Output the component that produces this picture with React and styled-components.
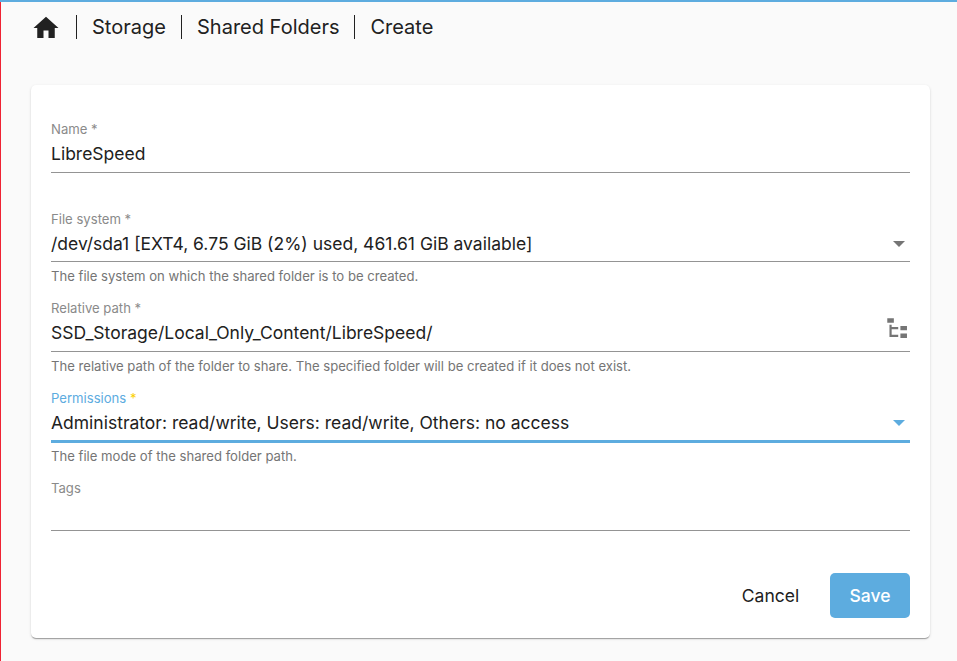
import React from 'react';
import styled, { createGlobalStyle } from 'styled-components';

const GlobalStyle = createGlobalStyle`
  * { box-sizing: border-box; }
  body {
    margin: 0;
    background: #fafafa;
    color: #212121;
    font-family: Inter, "Liberation Sans", sans-serif;
    overflow: hidden;
  }
`;

const Page = styled.div`
  display: flex;
  flex-direction: column;
  height: 661px;
  border-left: 1px solid #ef2334;
`;

const TopBar = styled.div`
  flex: none;
  height: 2px;
  margin-left: -1px;
  background: #5dacdf;
`;

const Breadcrumb = styled.nav`
  display: flex;
  align-items: center;
  flex: none;
  height: 50px;
  padding-left: 30px;
  font-size: 20px;
  line-height: 30px;
  white-space: nowrap;
`;

const HomeIcon = styled.svg`
  width: 30px;
  height: 30px;
  margin-top: 2px;
  fill: #212121;
`;

const Divider = styled.span`
  width: 1px;
  height: 24px;
  margin: 0 15px;
  background: #212121;
`;

const Crumb = styled.span`
  width: ${(p) => p.$width};
`;

const Card = styled.main`
  display: flex;
  flex-direction: column;
  margin: 33px 27px 0 30px;
  height: 553px;
  padding: 34.15px 20px 20px;
  border-radius: 5px;
  background: #fff;
  box-shadow: 0 2px 1px -1px rgba(0, 0, 0, 0.2), 0 1px 1px rgba(0, 0, 0, 0.14),
    0 1px 3px rgba(0, 0, 0, 0.12);
`;

const FieldBox = styled.div`
  display: flex;
  flex-direction: column;
  flex: none;
  height: 89.6px;
`;

const Label = styled.label`
  height: 20px;
  font-size: 13.125px;
  line-height: 20px;
  color: ${(p) => (p.$active ? '#5dacdf' : '#8a8a8a')};
`;

const Required = styled.span`
  color: ${(p) => (p.$active ? '#fbd000' : 'inherit')};
`;

const ValueRow = styled.div`
  display: flex;
  align-items: center;
  justify-content: space-between;
  height: 32.5px;
  padding-bottom: 2.5px;
  font-size: 17.5px;
  line-height: 24px;
  white-space: nowrap;
`;

const Underline = styled.div`
  flex: none;
  height: ${(p) => (p.$active ? '3px' : '1px')};
  margin-bottom: ${(p) => (p.$active ? '-1.5px' : '0')};
  background: ${(p) => (p.$active ? '#5dacdf' : '#949494')};
`;

const Hint = styled.div`
  padding-top: 4.1px;
  font-size: 13.125px;
  line-height: 20px;
  color: #757575;
  white-space: nowrap;
`;

const Arrow = styled.svg`
  width: 12px;
  height: 6px;
  margin-right: 5px;
  fill: ${(p) => (p.$active ? '#5dacdf' : '#757575')};
`;

const TreeIcon = styled.svg`
  width: 26.25px;
  height: 26.25px;
  margin-top: -10px;
  fill: #757575;
`;

const Actions = styled.div`
  display: flex;
  justify-content: flex-end;
  gap: 11px;
  margin-top: auto;
`;

const Button = styled.button`
  width: ${(p) => (p.$primary ? '80px' : '97px')};
  height: 45px;
  padding: 0;
  border: 0;
  border-radius: 5px;
  background: ${(p) => (p.$primary ? '#5dacdf' : 'transparent')};
  color: ${(p) => (p.$primary ? '#fff' : '#212121')};
  font: ${(p) => (p.$primary ? 500 : 400)} 17.5px/45px Inter, "Liberation Sans", sans-serif;
`;

function Field({ label, required, value, hint, active, select, tree }) {
  return (
    <FieldBox>
      <Label $active={active}>
        {label}
        {required && <Required $active={active}> *</Required>}
      </Label>
      <ValueRow>
        <span>{value}</span>
        {select && (
          <Arrow $active={active} viewBox="0 0 12 6">
            <path d="M0 0h12L6 6z" />
          </Arrow>
        )}
        {tree && (
          <TreeIcon viewBox="0 0 24 24">
            <path d="M3,3H9V7H3V3M15,10H21V14H15V10M15,17H21V21H15V17M13,13H7V18H13V20H5V9H7V11H13V13Z" />
          </TreeIcon>
        )}
      </ValueRow>
      <Underline $active={active} />
      {hint && <Hint>{hint}</Hint>}
    </FieldBox>
  );
}

export default function App() {
  return (
    <>
      <GlobalStyle />
      <Page>
        <TopBar />
        <Breadcrumb>
          <HomeIcon viewBox="0 0 24 24">
            <path d="M10,20V14H14V20H19V12H22L12,3L2,12H5V20H10Z" />
          </HomeIcon>
          <Divider />
          <Crumb $width="74px">Storage</Crumb>
          <Divider />
          <Crumb $width="142.4px">Shared Folders</Crumb>
          <Divider />
          <Crumb>Create</Crumb>
        </Breadcrumb>
        <Card>
          <Field label="Name" required value="LibreSpeed" />
          <Field
            label="File system"
            required
            select
            value="/dev/sda1 [EXT4, 6.75 GiB (2%) used, 461.61 GiB available]"
            hint="The file system on which the shared folder is to be created."
          />
          <Field
            label="Relative path"
            required
            tree
            value="SSD_Storage/Local_Only_Content/LibreSpeed/"
            hint="The relative path of the folder to share. The specified folder will be created if it does not exist."
          />
          <Field
            label="Permissions"
            required
            active
            select
            value="Administrator: read/write, Users: read/write, Others: no access"
            hint="The file mode of the shared folder path."
          />
          <Field label="Tags" />
          <Actions>
            <Button>Cancel</Button>
            <Button $primary>Save</Button>
          </Actions>
        </Card>
      </Page>
    </>
  );
}
